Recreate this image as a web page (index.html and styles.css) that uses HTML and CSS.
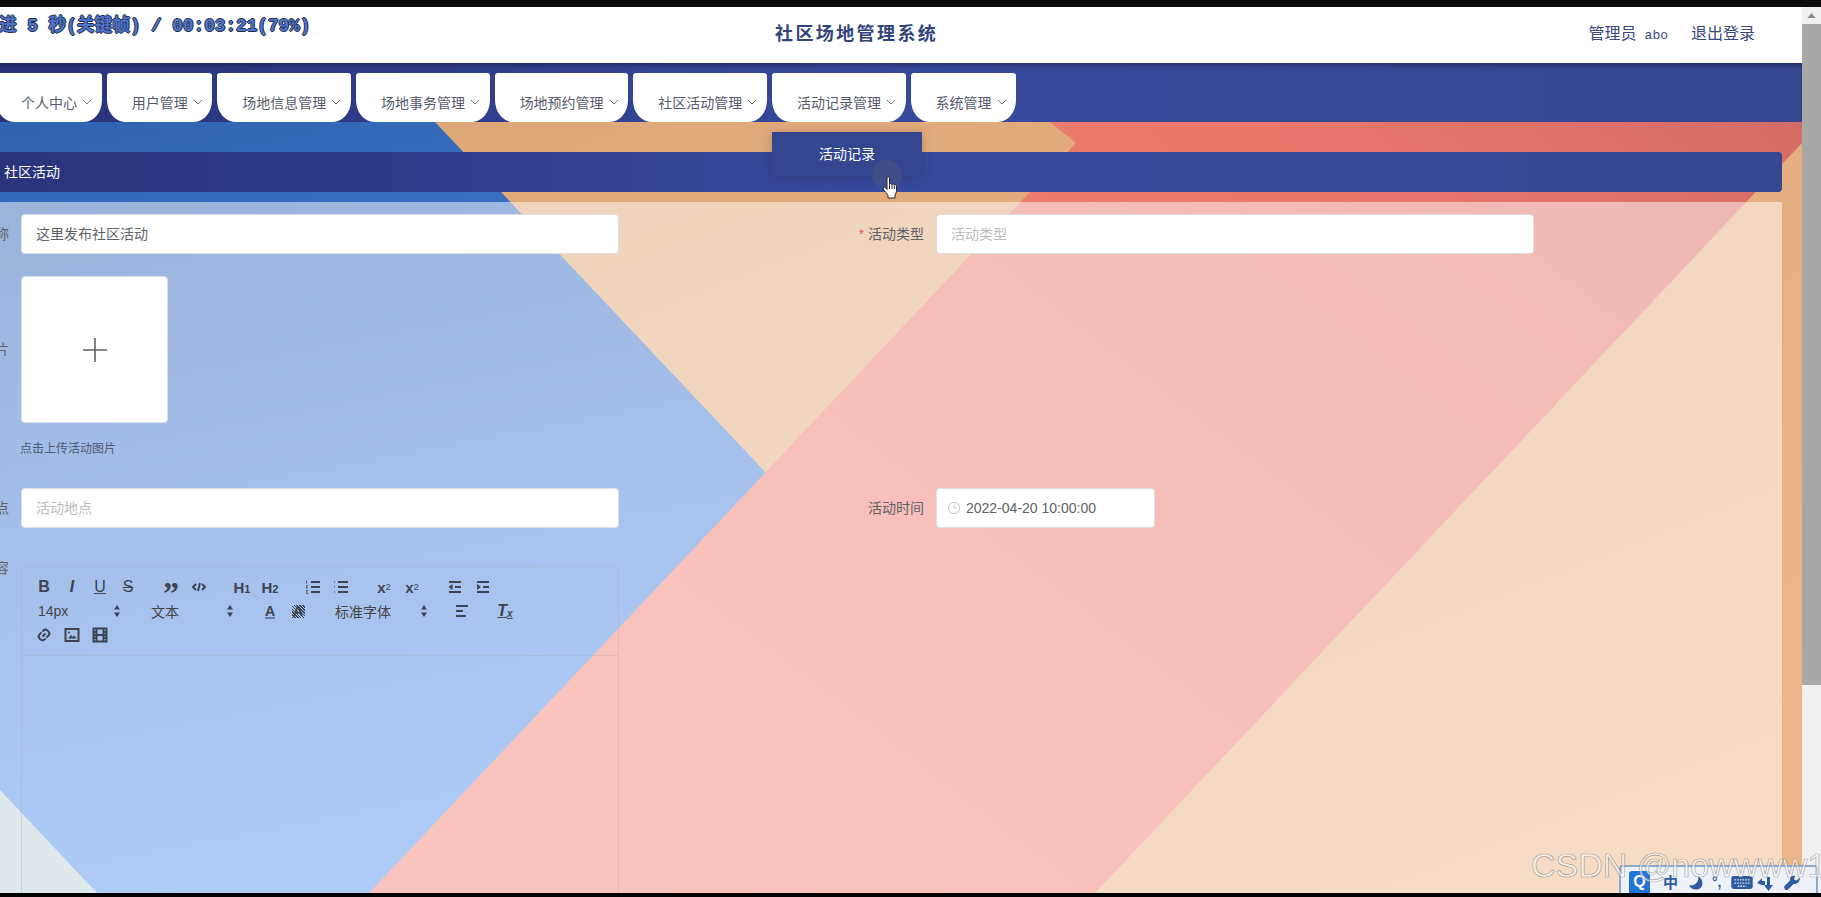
FILE: index.html
```html
<!DOCTYPE html>
<html lang="zh-CN">
<head>
    <meta charset="UTF-8">
    <title>社区场地管理系统</title>
    <link rel="stylesheet" href="styles.css">
</head>
<body>
    <div class="black-bar top"></div>
    <div class="screen">
        <div class="page">
            <!-- background shapes -->
            <svg class="bg" viewBox="0 0 1802 886" preserveAspectRatio="none">
                <defs>
                    <linearGradient id="blue" x1="0" y1="0" x2="0.2" y2="1">
                        <stop offset="0" stop-color="#2f63b2"/>
                        <stop offset="1" stop-color="#5e96f0"/>
                    </linearGradient>
                    <linearGradient id="red" x1="0" y1="0.7" x2="1" y2="0">
                        <stop offset="0" stop-color="#f5887c"/>
                        <stop offset="0.75" stop-color="#e9776c"/>
                        <stop offset="1" stop-color="#d56c66"/>
                    </linearGradient>
                    <linearGradient id="peach" x1="0" y1="0" x2="0.8" y2="1">
                        <stop offset="0" stop-color="#dba473"/>
                        <stop offset="1" stop-color="#edb68a"/>
                    </linearGradient>
                </defs>
                <rect x="0" y="0" width="1802" height="886" fill="url(#peach)"/>
                <polygon points="0,115 435,115 800,502 420,886 0,886" fill="url(#blue)"/>
                <polygon points="0,783 97,886 0,886" fill="#bcd2d9"/>
                <polygon points="1050,115 1802,115 1802,136 1095,886 369,886 1076,136" fill="url(#red)"/>
            </svg>

            <header class="top-header">
                <div class="site-title">社区场地管理系统</div>
                <div class="user-info">
                    <span>管理员<span class="user-name">abo</span></span>
                    <span class="logout">退出登录</span>
                </div>
            </header>

            <nav class="main-nav">
                <div class="nav-tab">个人中心<svg class="chev" viewBox="0 0 10 6"><path d="M1 1l4 4 4-4"/></svg></div>
                <div class="nav-tab">用户管理<svg class="chev" viewBox="0 0 10 6"><path d="M1 1l4 4 4-4"/></svg></div>
                <div class="nav-tab">场地信息管理<svg class="chev" viewBox="0 0 10 6"><path d="M1 1l4 4 4-4"/></svg></div>
                <div class="nav-tab">场地事务管理<svg class="chev" viewBox="0 0 10 6"><path d="M1 1l4 4 4-4"/></svg></div>
                <div class="nav-tab">场地预约管理<svg class="chev" viewBox="0 0 10 6"><path d="M1 1l4 4 4-4"/></svg></div>
                <div class="nav-tab">社区活动管理<svg class="chev" viewBox="0 0 10 6"><path d="M1 1l4 4 4-4"/></svg></div>
                <div class="nav-tab has-menu">活动记录管理<svg class="chev" viewBox="0 0 10 6"><path d="M1 1l4 4 4-4"/></svg>
                    <div class="dropdown">活动记录</div>
                </div>
                <div class="nav-tab">系统管理<svg class="chev" viewBox="0 0 10 6"><path d="M1 1l4 4 4-4"/></svg></div>
            </nav>

            <main class="content">
                <div class="panel-head">社区活动</div>
                <div class="panel-body">
                    <form class="form-grid">
                        <div class="form-item">
                            <label class="item-label">活动名称</label>
                            <div class="input filled">这里发布社区活动</div>
                        </div>
                        <div class="form-item">
                            <label class="item-label"><span class="star">*</span> 活动类型</label>
                            <div class="input placeholder">活动类型</div>
                        </div>

                        <div class="form-item item-upload">
                            <label class="item-label">活动图片</label>
                            <div>
                                <div class="upload">
                                    <svg class="plus" viewBox="0 0 24 24"><path d="M12 0v24M0 12h24"/></svg>
                                </div>
                                <div class="hint">点击上传活动图片</div>
                            </div>
                        </div>

                        <div class="form-item">
                            <label class="item-label">活动地点</label>
                            <div class="input placeholder">活动地点</div>
                        </div>
                        <div class="form-item">
                            <label class="item-label">活动时间</label>
                            <div class="input date">
                                <svg class="clock" viewBox="0 0 14 14"><circle cx="7" cy="7" r="5.6"/><path d="M7 3.6V7h3"/></svg>
                                2022-04-20 10:00:00
                            </div>
                        </div>

                        <div class="form-item item-editor">
                            <label class="item-label">活动内容</label>
                            <div class="editor">
                                <div class="toolbar">
                                    <span class="tool-group">
                                        <span class="tool t-bold">B</span>
                                        <span class="tool t-italic">I</span>
                                        <span class="tool t-under">U</span>
                                        <span class="tool t-strike">S</span>
                                    </span>
                                    <span class="tool-group">
                                        <span class="tool t-quote">”</span>
                                        <span class="tool"><svg class="ico" viewBox="0 0 18 18"><path d="M6 6L3 9l3 3M12 6l3 3-3 3M10 5l-2 8"/></svg></span>
                                    </span>
                                    <span class="tool-group">
                                        <span class="tool t-head">H<small>1</small></span>
                                        <span class="tool t-head">H<small>2</small></span>
                                    </span>
                                    <span class="tool-group">
                                        <span class="tool"><svg class="ico" viewBox="0 0 18 18"><path d="M7 4h9M7 9h9M7 14h9"/><path class="thin" d="M2.5 2.5v3M2 7.5h1.5L2 10h1.8M2 12.5h1.7L2.6 14l1.1 1.5H2"/></svg></span>
                                        <span class="tool"><svg class="ico" viewBox="0 0 18 18"><path d="M6 4h10M6 9h10M6 14h10M2.5 4h.5M2.5 9h.5M2.5 14h.5"/></svg></span>
                                    </span>
                                    <span class="tool-group">
                                        <span class="tool t-script">x<sub>2</sub></span>
                                        <span class="tool t-script">x<sup>2</sup></span>
                                    </span>
                                    <span class="tool-group">
                                        <span class="tool"><svg class="ico" viewBox="0 0 18 18"><path d="M3 4h12M9 9h6M3 14h12"/><path class="solid" d="M6.5 6v6L2.5 9z"/></svg></span>
                                        <span class="tool"><svg class="ico" viewBox="0 0 18 18"><path d="M3 4h12M9 9h6M3 14h12"/><path class="solid" d="M3 6v6l4-3z"/></svg></span>
                                    </span>
                                    <span class="tool-group">
                                        <span class="picker">14px<svg class="updown" viewBox="0 0 8 14"><path d="M4 1l3 4.5H1zM4 13l3-4.5H1z"/></svg></span>
                                    </span>
                                    <span class="tool-group">
                                        <span class="picker">文本<svg class="updown" viewBox="0 0 8 14"><path d="M4 1l3 4.5H1zM4 13l3-4.5H1z"/></svg></span>
                                    </span>
                                    <span class="tool-group">
                                        <span class="tool t-color">A</span>
                                        <span class="tool t-back">A</span>
                                    </span>
                                    <span class="tool-group group-font">
                                        <span class="picker picker-font">标准字体<svg class="updown" viewBox="0 0 8 14"><path d="M4 1l3 4.5H1zM4 13l3-4.5H1z"/></svg></span>
                                    </span>
                                    <span class="tool-group">
                                        <span class="tool"><svg class="ico" viewBox="0 0 18 18"><path d="M3 4h12M3 9h7M3 14h10"/></svg></span>
                                    </span>
                                    <span class="tool-group">
                                        <span class="tool t-clean">T<small>x</small></span>
                                    </span>
                                    <span class="tool-group">
                                        <span class="tool"><svg class="ico" viewBox="0 0 18 18"><path d="M7.5 10.5l3-3M6.5 6.5L4.6 8.4a3 3 0 0 0 0 4.2l.8.8a3 3 0 0 0 4.2 0l1-1M11.5 11.5l1.9-1.9a3 3 0 0 0 0-4.2l-.8-.8a3 3 0 0 0-4.2 0l-1 1"/></svg></span>
                                        <span class="tool"><svg class="ico" viewBox="0 0 18 18"><rect x="2.5" y="3" width="13" height="12"/><path class="solid" d="M5 12.5l3-3.500 2 2 1.500-1.500 2 3z"/><circle class="solid" cx="6" cy="6.500" r="1"/></svg></span>
                                        <span class="tool"><svg class="ico" viewBox="0 0 18 18"><rect x="2.5" y="2.5" width="13" height="13"/><path d="M5.5 3v12M12.5 3v12M6 9h6M3 6h2M3 9h2M3 12h2M13 6h2M13 9h2M13 12h2"/></svg></span>
                                    </span>
                                </div>
                                <div class="editor-body"></div>
                            </div>
                        </div>
                    </form>
                </div>
            </main>

            <div class="video-osd">进 5 秒(关键帧) / 00:03:21(79%)</div>

            <div class="cursor-halo"></div>
            <svg class="cursor-hand" viewBox="0 0 17 23">
                <path d="M5 2c0-1.600 2.500-1.600 2.500 0v6.500c.2-1.300 2.400-1.300 2.500.3.300-1.200 2.300-1 2.400.4.400-.9 2.100-.6 2.100.8v4.500c0 2-.7 3.200-1.500 4.500V22H6v-2.500C4.500 17.500 2.800 15.500 1.300 13c-.8-1.400.9-2.500 2-1.400L5 13.500z"/>
                <path d="M7.500 9v4M10 9v4M12.400 9.500V13"/>
            </svg>
        </div>

        <div class="scrollbar">
            <svg class="scroll-arrow" viewBox="0 0 10 6"><path d="M5 0l5 6H0z"/></svg>
            <div class="scroll-thumb"></div>
        </div>

        <div class="ime-bar">
            <span class="ime-q">Q</span>
            <span class="ime-zh">中</span>
            <svg class="ime-ico ime-moon" viewBox="0 0 18 18"><path d="M11 2c1.500 5-2 10-9 9.500C4 15 8 16.500 12 15s5.500-9-1-13z"/></svg>
            <span class="ime-punct">°,</span>
            <svg class="ime-keyboard" viewBox="0 0 20 14"><rect x="0" y="1" width="20" height="12" rx="2"/><path class="keys" d="M3 4.500h14M3 7.500h14M6 10.500h8"/></svg>
            <svg class="ime-ico ime-arrows" viewBox="0 0 18 18"><path d="M1 9l5-5v3h3v4H6v0zM11 3h3v8h3l-4.500 6L8 11h3z"/></svg>
            <svg class="ime-ico ime-wrench" viewBox="0 0 18 18"><path d="M17 3.500l-3.500 3-2.500-1L12 2C9 1 6.500 3 7 6.500L1 12.500 2 16h2.500l6-6c3.500.8 6.500-2.500 6.500-6.500z"/></svg>
        </div>
        <div class="watermark">CSDN @nowwww1</div>
    </div>
    <div class="black-bar bottom"></div>
</body>
</html>
```

FILE: styles.css
```css
* {
    box-sizing: border-box;
}
html, body {
    height: 100%;
    margin: 0;
    overflow: hidden;
}
body {
    display: flex;
    flex-direction: column;
    background: #000;
    font-family: "Liberation Sans", "Noto Sans CJK SC", sans-serif;
    font-size: 14px;
    color: #606266;
}
.black-bar.top {
    height: 7px;
    background: #0c0c0c;
}
.black-bar.bottom {
    height: 4px;
    background: #000;
}
.screen {
    flex: 1;
    display: flex;
    position: relative;
    overflow: hidden;
    min-height: 0;
}
.page {
    flex: 1;
    position: relative;
    overflow: hidden;
    min-width: 0;
}
.bg {
    position: absolute;
    top: 0;
    left: 0;
    width: 100%;
    height: 100%;
}

/* header */
.top-header {
    position: relative;
    display: flex;
    align-items: center;
    height: 56px;
    padding: 0 47px 7px 775px;
    background: #fff;
    color: #3b4a7c;
}
.site-title {
    font-size: 18px;
    font-weight: 700;
    letter-spacing: 2.4px;
    color: #33447a;
}
.user-info {
    margin-left: auto;
    display: flex;
    gap: 23px;
    font-size: 16px;
}
.user-name {
    margin-left: 8px;
    font-family: "Liberation Mono", monospace;
    font-size: 13px;
}

/* nav */
.main-nav {
    position: relative;
    z-index: 3;
    display: flex;
    gap: 5px;
    height: 59px;
    padding-top: 10px;
    margin-left: -4px;
    background: linear-gradient(90deg, #28337a, #36499b 50%, #34478f);
    box-shadow: inset 0 4px 4px -2px rgba(20, 25, 60, .6);
    width: calc(100% + 4px);
}
.nav-tab {
    position: relative;
    display: flex;
    align-items: flex-start;
    height: 49px;
    padding: 20px 9.67px 0 25px;
    line-height: 20px;
    background: #fff;
    color: #555b6e;
    border-radius: 3px 3px 18px 18px / 3px 3px 22px 22px;
}
.chev {
    width: 10px;
    height: 6px;
    margin: 6px 0 0 5px;
    fill: none;
    stroke: #777;
    stroke-width: 1;
}
.dropdown {
    position: absolute;
    top: 59px;
    left: 0;
    width: 150px;
    height: 44px;
    line-height: 44px;
    text-align: center;
    color: #fff;
    background: #33468f;
    box-shadow: 0 2px 10px rgba(40, 40, 60, .25);
}

/* main */
.content {
    position: relative;
    padding: 30px 20px 0 0;
}
.panel-head {
    height: 40px;
    line-height: 40px;
    margin-left: -20px;
    padding-left: 24px;
    border-radius: 4px;
    color: #fff;
    background: linear-gradient(90deg, #28337a, #36499b 50%, #34478f);
}
.panel-body {
    margin-top: 10px;
    padding-top: 12px;
    height: 800px;
    background: rgba(255, 255, 255, .5);
}
.form-grid {
    display: grid;
    grid-template-columns: 915px 915px;
    margin-left: -87px;
}
.form-item {
    display: flex;
    margin-bottom: 22px;
}
.item-upload, .item-editor {
    grid-column: 1 / -1;
}
.item-upload {
    margin-bottom: 0;
}
.item-label {
    width: 108px;
    flex: none;
    padding-right: 12px;
    line-height: 40px;
    text-align: right;
}
.item-upload .item-label {
    line-height: 147px;
}
.item-editor .item-label {
    line-height: 36px;
}
.star {
    color: #e2574c;
}
.input {
    width: 598px;
    height: 40px;
    line-height: 38px;
    padding: 0 14px;
    background: #fff;
    border: 1px solid #dcdfe6;
    border-radius: 4px;
}
.placeholder {
    color: #bbbdc2;
}
.date {
    display: flex;
    align-items: center;
    width: 219px;
    padding-left: 10px;
    gap: 5px;
}
.clock {
    width: 14px;
    height: 14px;
    fill: none;
    stroke: #c0c4cc;
    stroke-width: 1;
}
.upload {
    display: flex;
    align-items: center;
    justify-content: center;
    width: 147px;
    height: 147px;
    background: #fff;
    border: 1px solid #dcdfe6;
    border-radius: 4px;
}
.plus {
    width: 24px;
    height: 24px;
    fill: none;
    stroke: #606266;
    stroke-width: 1.6;
}
.hint {
    margin: 16px 0 29px -1px;
    font-size: 12px;
    line-height: 20px;
    color: #4e5b76;
}

/* editor */
.editor {
    width: 598px;
    margin-top: 16px;
    border: 1px solid rgba(165, 170, 180, .3);
    flex: none;
}
.toolbar {
    display: flex;
    flex-wrap: wrap;
    padding: 8px;
    border-bottom: 1px solid rgba(165, 170, 180, .3);
    color: #444;
}
.tool-group {
    display: flex;
    margin-right: 15px;
    height: 24px;
}
.group-font {
    margin-right: 13px;
}
.tool {
    display: flex;
    align-items: center;
    justify-content: center;
    width: 28px;
    height: 24px;
    font-size: 16px;
    line-height: 1;
    color: #3d4350;
}
.ico {
    width: 18px;
    height: 18px;
    fill: none;
    stroke: #3d4350;
    stroke-width: 2;
}
.ico .thin {
    stroke-width: .8;
}
.ico .solid {
    fill: #3d4350;
    stroke: none;
}
.t-bold {
    font-weight: 700;
}
.t-italic {
    font-style: italic;
    font-weight: 700;
}
.t-under {
    text-decoration: underline;
}
.t-strike {
    text-decoration: line-through;
}
.t-quote {
    font-family: "Liberation Serif", serif;
    font-size: 32px;
    font-weight: 700;
    padding-top: 12px;
}
.t-head {
    font-weight: 700;
    font-size: 15px;
}
.t-head small {
    font-size: 11px;
    margin-top: 4px;
}
.t-script {
    font-weight: 700;
    font-size: 15px;
}
.t-script sub, .t-script sup {
    font-size: 9px;
    font-weight: 400;
    line-height: 0;
}
.picker {
    display: flex;
    align-items: center;
    justify-content: space-between;
    width: 98px;
    height: 24px;
    padding: 0 7px 0 8px;
    font-size: 14px;
    color: #444;
    font-weight: 400;
}
.picker-font {
    width: 108px;
}
.updown {
    width: 8px;
    height: 14px;
    fill: #3d4350;
}
.t-color {
    font-weight: 700;
    font-size: 14px;
    text-decoration: underline;
    text-decoration-color: #6c7a99;
    text-decoration-thickness: 2px;
}
.t-back {
    font-weight: 700;
    font-size: 14px;
    background: repeating-linear-gradient(45deg, #3d4350 0 1px, transparent 1px 2px) center / 13px 13px no-repeat;
}
.t-clean {
    font-style: italic;
    font-weight: 700;
    text-decoration: underline;
}
.t-clean small {
    font-size: 10px;
    margin-top: 6px;
}
.editor-body {
    height: 400px;
}

/* video overlay, cursor, ime */
.video-osd {
    position: absolute;
    z-index: 5;
    top: 8px;
    left: -1px;
    font-family: "Liberation Mono", "Noto Sans CJK SC", monospace;
    font-size: 17.7px;
    font-weight: 700;
    line-height: 22px;
    color: #4f74cc;
    text-shadow: 1px 0 #26304c, -1px 0 #26304c, 0 1px #26304c, 0 -1px #26304c;
    white-space: nowrap;
}
.cursor-halo {
    position: absolute;
    z-index: 5;
    top: 153px;
    left: 872px;
    width: 30px;
    height: 30px;
    border-radius: 50%;
    background: rgba(110, 110, 120, .22);
}
.cursor-hand {
    position: absolute;
    z-index: 6;
    top: 169px;
    left: 882px;
    width: 17px;
    height: 23px;
    fill: #fff;
    stroke: #222;
    stroke-width: 1;
}
.scrollbar {
    width: 19px;
    flex: none;
    background: #f1f1f1;
    display: flex;
    flex-direction: column;
    align-items: center;
}
.scroll-arrow {
    width: 9px;
    height: 5px;
    margin: 6px 0 6px;
    fill: #8a8a8a;
}
.scroll-thumb {
    width: 100%;
    height: 661px;
    background: #a8a8a8;
}
.ime-bar {
    position: absolute;
    z-index: 7;
    left: 1619px;
    bottom: 0;
    width: 199px;
    height: 28px;
    display: flex;
    align-items: flex-end;
    padding-left: 8px;
    background: #eef2f8;
    border: 2px solid #8ba9d2;
    border-bottom: none;
    border-radius: 3px 3px 0 0;
    color: #2f5b9f;
}
.ime-q {
    width: 21px;
    height: 22px;
    line-height: 22px;
    text-align: center;
    font-weight: 700;
    font-size: 16px;
    color: #fff;
    background: #1f74d6;
    border-radius: 3px 3px 0 0;
}
.ime-zh {
    margin-left: 13px;
    font-size: 15px;
    line-height: 20px;
    font-weight: 700;
}
.ime-punct {
    margin-left: 7px;
    font-size: 14px;
    line-height: 22px;
    font-weight: 700;
}
.ime-ico {
    width: 18px;
    height: 18px;
    fill: #2f5b9f;
    margin-bottom: 1px;
}
.ime-moon {
    margin-left: 9px;
}
.ime-keyboard {
    width: 22px;
    height: 15px;
    margin: 0 0 3px 9px;
    fill: #2f5b9f;
}
.ime-keyboard .keys {
    stroke: #dfe8f4;
    stroke-width: 1.2;
    stroke-dasharray: 1.5 1;
}
.ime-arrows {
    margin-left: 3px;
}
.ime-wrench {
    margin-left: 9px;
}
.watermark {
    position: absolute;
    z-index: 8;
    left: 1531px;
    top: 838px;
    font-family: "Liberation Sans", sans-serif;
    font-size: 34px;
    line-height: 40px;
    white-space: nowrap;
    color: rgba(255, 255, 255, .55);
    -webkit-text-stroke: .7px rgba(110, 110, 110, .6);
}
```
